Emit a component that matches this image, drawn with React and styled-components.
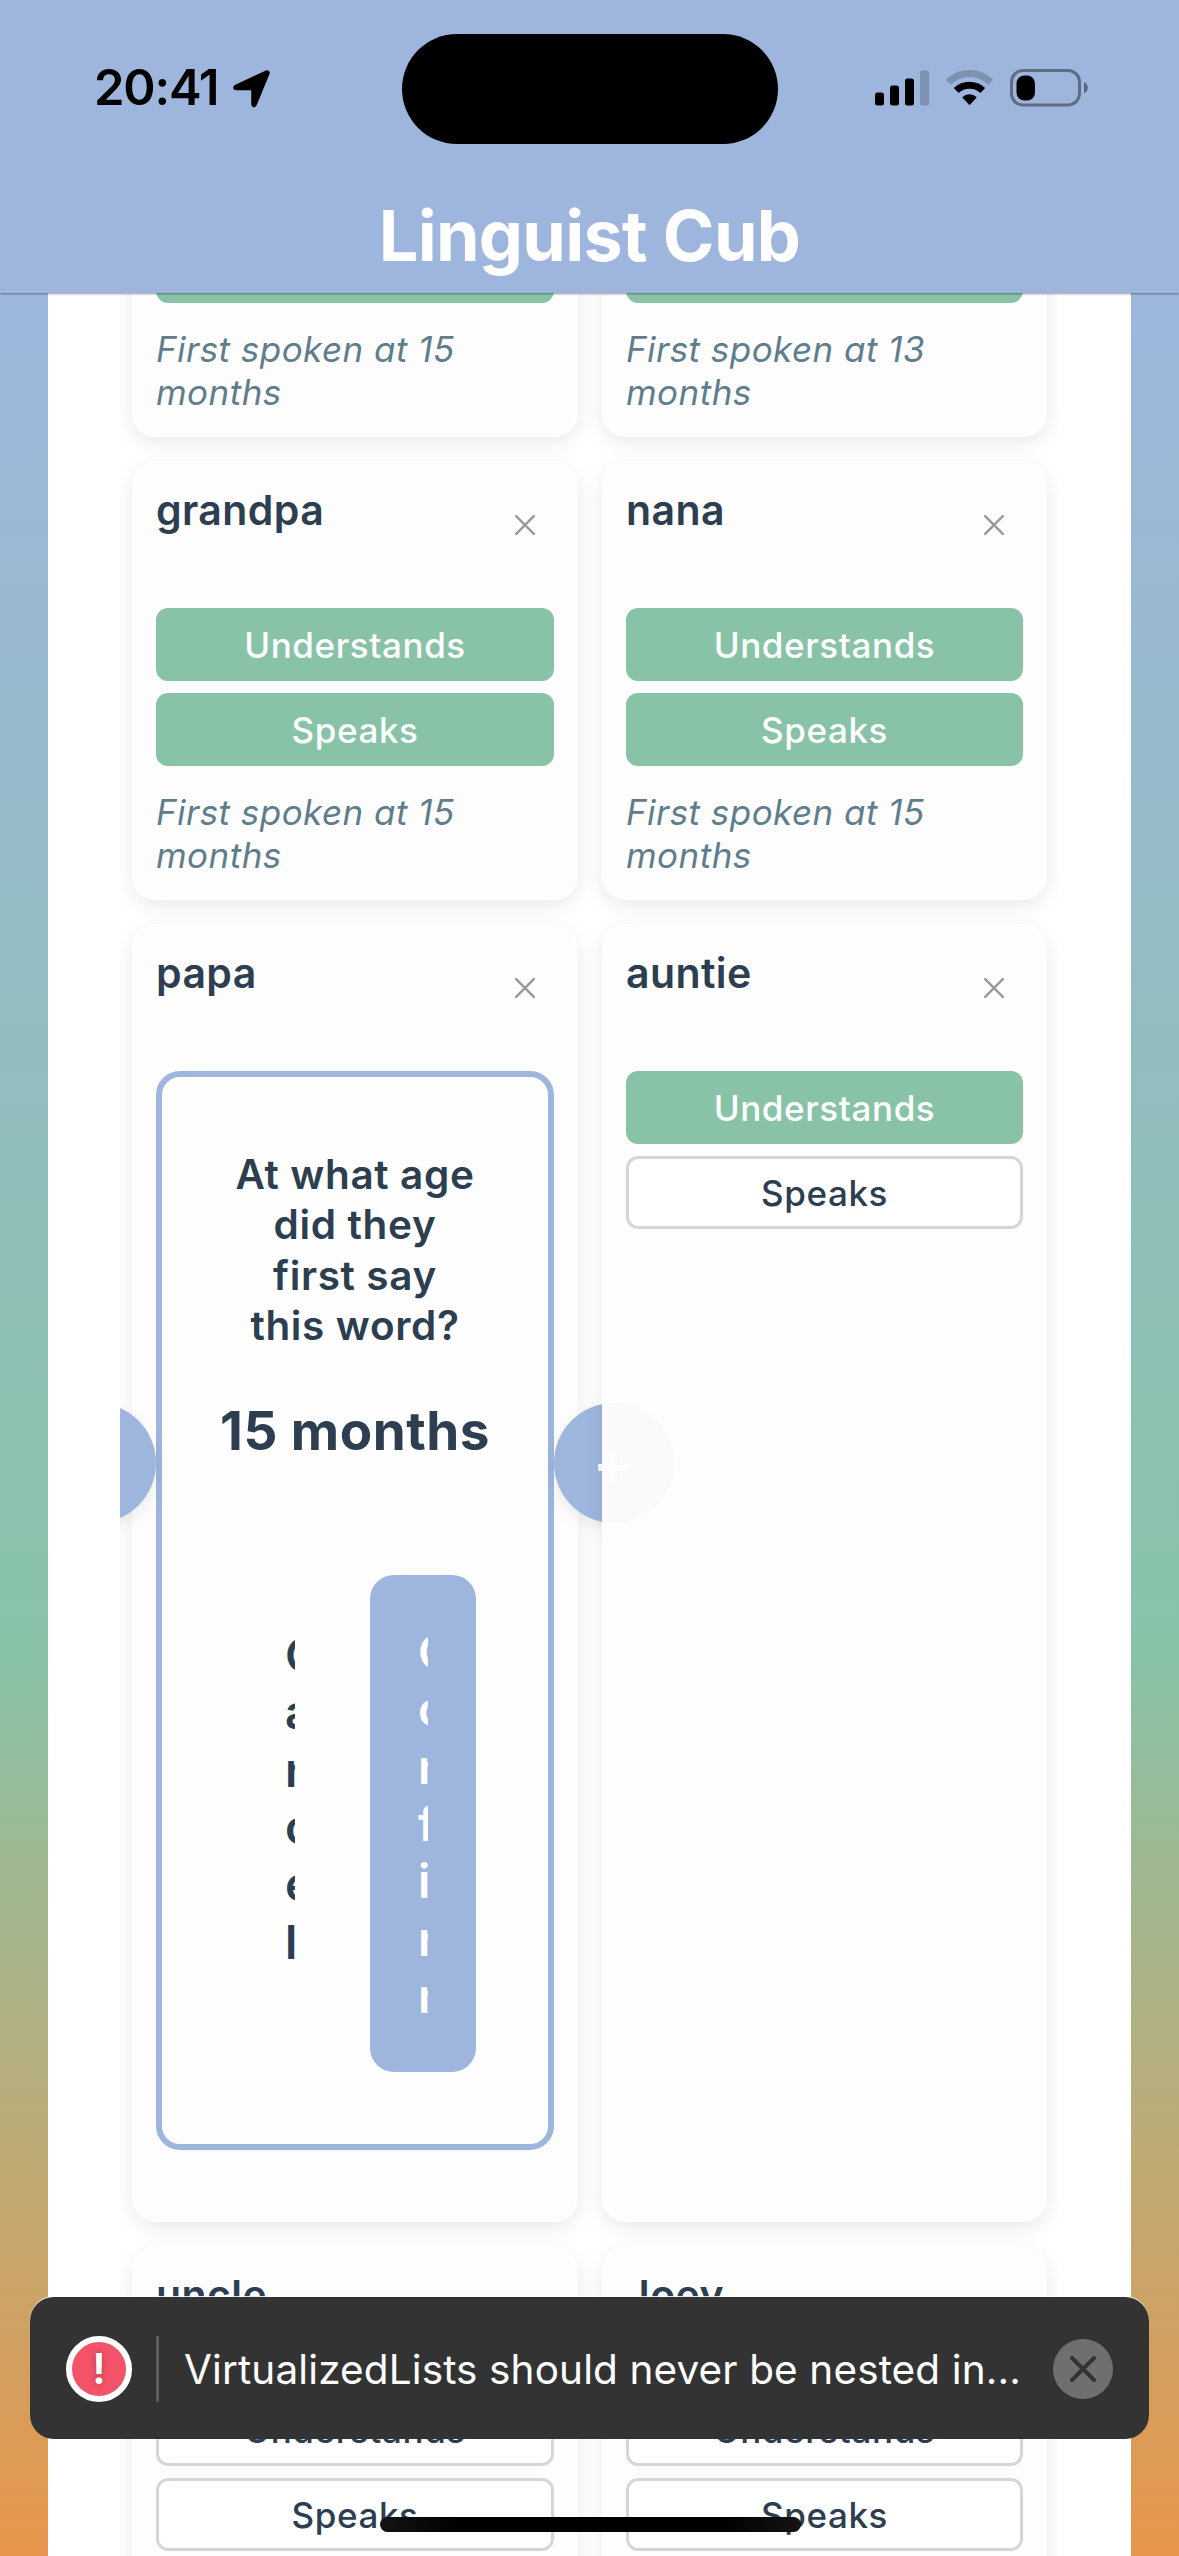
import React from "react";
import styled, { createGlobalStyle } from "styled-components";

const GlobalStyle = createGlobalStyle`
  * { box-sizing: border-box; }
  html, body { margin: 0; padding: 0; }
  body { font-family: Inter, "Liberation Sans", sans-serif; -webkit-font-smoothing: antialiased; }
`;

const Screen = styled.div`
  position: relative;
  width: 1179px;
  height: 2556px;
  overflow: hidden;
  display: flex;
  flex-direction: column;
  background: linear-gradient(180deg, #9eb6dd 294px, #88c3a8 1651px, #e8964b 2556px);
`;

const Header = styled.header`
  position: relative;
  z-index: 2;
  flex: none;
  height: 293px;
  background: #9eb6dd;
  box-shadow: 0 1px 2px rgba(0, 0, 0, 0.4);
  display: flex;
  flex-direction: column;
`;

const StatusBar = styled.div`
  height: 177px;
  padding: 33px 91px 33px 94px;
  display: grid;
  grid-template-columns: 308px 376px 1fr;
`;

const Clock = styled.div`
  display: flex;
  align-items: center;
  gap: 15px;
  padding-bottom: 1px;
  font-size: 49px;
  line-height: 60px;
  font-weight: 600;
  letter-spacing: -1.2px;
  color: #000;
  svg { margin-top: 2px; }
`;

const Island = styled.div`
  height: 110px;
  margin-top: 1px;
  border-radius: 55px;
  background: #000;
`;

const Indicators = styled.div`
  display: flex;
  align-items: center;
  justify-content: flex-end;
  gap: 17px;
  padding-bottom: 2px;
`;

const AppTitle = styled.h1`
  margin: 17px 0 0;
  text-align: center;
  font-size: 70px;
  line-height: 84px;
  font-weight: 700;
  letter-spacing: -0.7px;
  color: #fff;
`;

const Panel = styled.main`
  flex: 1;
  min-height: 0;
  margin: 0 48px;
  padding: 0 72px;
  background: #fff;
`;

const WordGrid = styled.div`
  height: 100%;
  padding: 0 12px;
  overflow: hidden;
  display: grid;
  grid-template-columns: 446px 445px;
  grid-template-rows: 439px 439px 1298px 439px;
  gap: 24px;
  align-content: start;
  > * { margin-top: -295px; margin-bottom: 295px; }
`;

const Card = styled.section`
  position: relative;
  padding: 24px;
  border-radius: 24px;
  background: rgba(253, 253, 253, 0.96);
  box-shadow: 0 6px 20px rgba(0, 0, 0, 0.085), inset 0 0 10px #fff;
  display: flex;
  flex-direction: column;
`;

const CardHead = styled.div`
  flex: none;
  height: 123px;
  display: flex;
  justify-content: space-between;
  align-items: flex-start;
`;

const Word = styled.h2`
  margin: 0;
  font-size: 41px;
  line-height: 50px;
  font-weight: 600;
  letter-spacing: 0.4px;
  color: #2c3e50;
`;

const Remove = styled.button`
  width: 59px;
  height: 60px;
  margin-top: 10px;
  padding: 0;
  border: 0;
  background: none;
  display: flex;
  align-items: center;
  justify-content: center;
`;

const Toggles = styled.div`
  display: flex;
  flex-direction: column;
  gap: 12px;
`;

const Toggle = styled.button`
  height: 73px;
  padding: 2px 0 0;
  border: 3px solid ${(p) => (p.$on ? "#88c3a8" : "#d3d7dc")};
  border-radius: 12px;
  background: ${(p) => (p.$on ? "#88c3a8" : "#fff")};
  color: ${(p) => (p.$on ? "#fff" : "#2c3e50")};
  font: 500 35px/43px Inter, "Liberation Sans", sans-serif;
  letter-spacing: 0.6px;
`;

const Note = styled.p`
  margin: 25px 0 0;
  font-size: 35px;
  line-height: 43px;
  font-style: italic;
  letter-spacing: 0.45px;
  color: #5f7d8c;
`;

const Dialog = styled.div`
  position: relative;
  height: 1079px;
  padding: 73px 72px 71px;
  border: 6px solid #9eb6dd;
  border-radius: 24px;
  background: #fefefe;
  color: #2c3e50;
  text-align: center;
`;

const Question = styled.p`
  margin: 0 -20px;
  font-size: 40.5px;
  line-height: 50.3px;
  font-weight: 600;
  letter-spacing: 0.65px;
`;

const Age = styled.p`
  margin: 48px -40px 0;
  font-size: 53px;
  line-height: 64px;
  font-weight: 700;
  letter-spacing: 0.5px;
  white-space: nowrap;
`;

const Step = styled.button`
  position: absolute;
  top: 326px;
  ${(p) => p.$side}: -126px;
  width: 120px;
  height: 120px;
  padding: 2px 2px 0 0;
  border: 0;
  border-radius: 50%;
  background: #9eb6dd;
  box-shadow: 0 6px 16px rgba(0, 0, 0, 0.08);
  color: #fff;
  font: 700 59px/60px Inter, "Liberation Sans", sans-serif;
`;

const Actions = styled.div`
  margin-top: 112px;
  display: flex;
  gap: 24px;
`;

const Action = styled.button`
  width: ${(p) => (p.$primary ? "106px" : "112px")};
  height: 497px;
  padding: 48px;
  border: ${(p) => (p.$primary ? "0" : "3px solid transparent")};
  border-radius: 24px;
  background: ${(p) => (p.$primary ? "#9eb6dd" : "transparent")};
  color: ${(p) => (p.$primary ? "#fff" : "#2c3e50")};
  display: flex;
  align-items: flex-start;
`;

const ActionLabel = styled.span`
  width: 11px;
  overflow: hidden;
  text-align: left;
  word-break: break-all;
  font: 600 47px/57.3px Inter, "Liberation Sans", sans-serif;
`;

const Toast = styled.div`
  position: absolute;
  z-index: 3;
  left: 30px;
  right: 30px;
  top: 2297px;
  height: 142px;
  padding: 0 36px;
  border-radius: 24px;
  background: #333;
  box-shadow: 0 -1px 0 rgba(255, 255, 255, 0.85);
  display: flex;
  align-items: center;
`;

const AlertBadge = styled.div`
  flex: none;
  width: 66px;
  height: 66px;
  margin-top: 1px;
  border: 6px solid #fff;
  border-radius: 50%;
  background: #f35369;
  color: #fff;
  display: flex;
  align-items: center;
  justify-content: center;
  font-size: 42px;
  line-height: 54px;
  font-weight: 600;
  text-shadow: 0 0 6px rgba(0, 0, 0, 0.3);
`;

const Divider = styled.div`
  flex: none;
  width: 3px;
  height: 66px;
  margin: 1px 25px 0 24px;
  background: #5c5c5c;
`;

const Message = styled.div`
  flex: 1;
  padding-top: 3px;
  white-space: nowrap;
  font-size: 40.5px;
  line-height: 54px;
  letter-spacing: 0.12px;
  color: #fff;
`;

const Dismiss = styled.button`
  flex: none;
  width: 60px;
  height: 60px;
  margin-top: 2px;
  padding: 0;
  border: 0;
  border-radius: 50%;
  background: #6f6f6f;
  display: flex;
  align-items: center;
  justify-content: center;
`;

const HomeIndicator = styled.div`
  position: absolute;
  z-index: 4;
  left: 380px;
  top: 2517px;
  width: 421px;
  height: 15px;
  border-radius: 8px;
  background: linear-gradient(90deg, #131313, #000 80px, #000 341px, #131313);
`;

function Cross({ size, color, width }) {
  const a = width / 2;
  const b = size - a;
  return (
    <svg width={size} height={size} viewBox={`0 0 ${size} ${size}`}>
      <path d={`M${a} ${a}L${b} ${b}M${b} ${a}L${a} ${b}`} stroke={color} strokeWidth={width} strokeLinecap="round" fill="none" />
    </svg>
  );
}

function WordCard({ word, understands, speaks, age, children }) {
  return (
    <Card>
      <CardHead>
        <Word>{word}</Word>
        <Remove aria-label="Remove"><Cross size={20} color="#999" width={2.4} /></Remove>
      </CardHead>
      {children || (
        <Toggles>
          <Toggle $on={understands}>Understands</Toggle>
          <Toggle $on={speaks}>Speaks</Toggle>
        </Toggles>
      )}
      {age && <Note>First spoken at {age}<br />months</Note>}
    </Card>
  );
}

function AgeDialog() {
  return (
    <Dialog>
      <Question>At what age<br />did they<br />first say<br />this word?</Question>
      <Age>15 months</Age>
      <Step $side="left" aria-label="Decrease" />
      <Step $side="right">+</Step>
      <Actions>
        <Action><ActionLabel>Cancel</ActionLabel></Action>
        <Action $primary><ActionLabel>Confirm</ActionLabel></Action>
      </Actions>
    </Dialog>
  );
}

export default function App() {
  return (
    <Screen>
      <GlobalStyle />
      <Header>
        <StatusBar>
          <Clock>
            <span>20:41</span>
            <svg width="38" height="38" viewBox="0 0 38 38">
              <path d="M3 17.5L34 3L21 34.5V17.5Z" fill="#000" stroke="#000" strokeWidth="5.5" strokeLinejoin="round" />
            </svg>
          </Clock>
          <Island />
          <Indicators>
            <svg width="54" height="36" viewBox="0 0 54 36">
              <rect x="0" y="22.5" width="9" height="13" rx="2.5" />
              <rect x="15" y="15.5" width="9" height="20" rx="2.5" />
              <rect x="30" y="8.5" width="9" height="27" rx="2.5" />
              <rect x="45" y="0.5" width="9" height="35" rx="2.5" opacity="0.2" />
            </svg>
            <svg width="47" height="36" viewBox="0 0 47 36">
              <path d="M2.2 12.2A30.5 30.5 0 0 1 44.8 12.2" fill="none" stroke="#000" strokeOpacity="0.2" strokeWidth="7" />
              <path d="M10.2 20.6A19.2 19.2 0 0 1 36.8 20.6" fill="none" stroke="#000" strokeWidth="7" />
              <path d="M16.2 27.2A10.4 10.4 0 0 1 30.8 27.2L23.5 35.2Z" />
            </svg>
            <svg width="78" height="38" viewBox="0 0 78 38">
              <rect x="1.5" y="1.5" width="68" height="34.5" rx="11.5" fill="none" stroke="#000" strokeOpacity="0.4" strokeWidth="3" />
              <rect x="6.5" y="6.5" width="18.5" height="25" rx="8" />
              <path d="M74 13.2C79 15.5 79 22 74 24.3Z" fillOpacity="0.45" />
            </svg>
          </Indicators>
        </StatusBar>
        <AppTitle>Linguist Cub</AppTitle>
      </Header>
      <Panel>
        <WordGrid>
          <WordCard word="grandma" understands speaks age={15} />
          <WordCard word="mama" understands speaks age={13} />
          <WordCard word="grandpa" understands speaks age={15} />
          <WordCard word="nana" understands speaks age={15} />
          <WordCard word="papa"><AgeDialog /></WordCard>
          <WordCard word="auntie" understands />
          <WordCard word="uncle" />
          <WordCard word="Joey" />
        </WordGrid>
      </Panel>
      <Toast>
        <AlertBadge>!</AlertBadge>
        <Divider />
        <Message>VirtualizedLists should never be nested in...</Message>
        <Dismiss aria-label="Dismiss"><Cross size={26} color="#333" width={4} /></Dismiss>
      </Toast>
      <HomeIndicator />
    </Screen>
  );
}
